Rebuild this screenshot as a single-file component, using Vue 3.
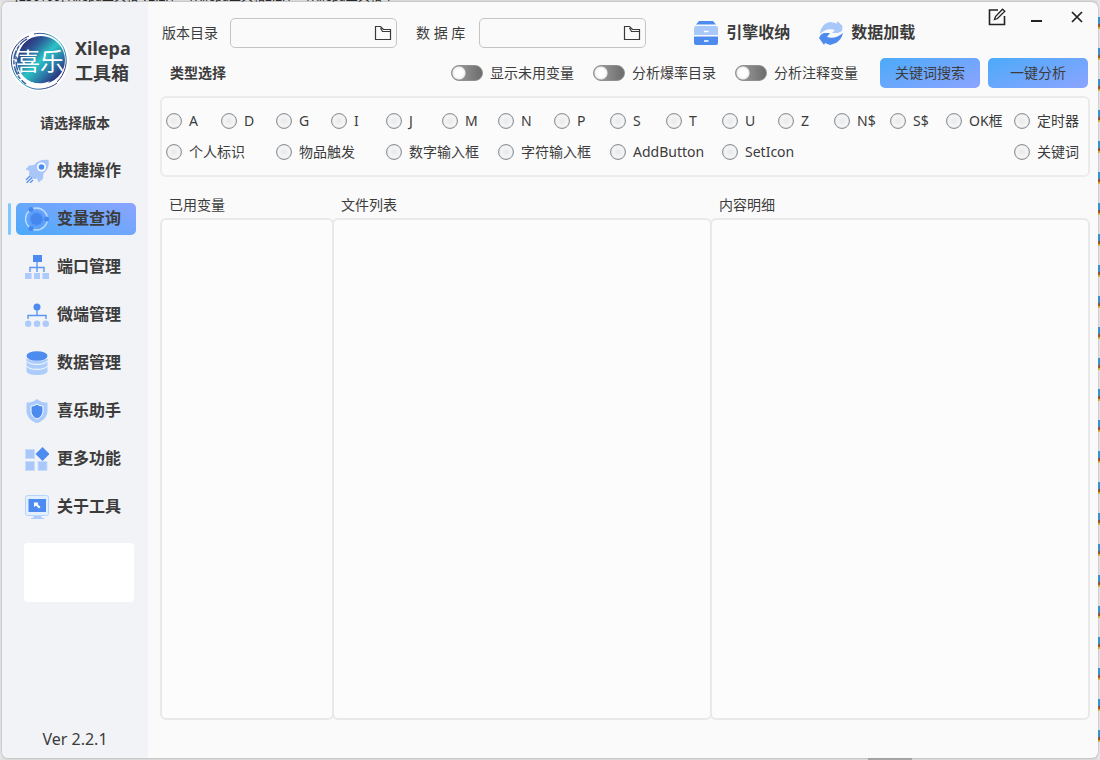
<script setup>
import { ref } from 'vue'

const menu = [
  { id: 'quick', label: '快捷操作' },
  { id: 'vars', label: '变量查询' },
  { id: 'port', label: '端口管理' },
  { id: 'micro', label: '微端管理' },
  { id: 'data', label: '数据管理' },
  { id: 'helper', label: '喜乐助手' },
  { id: 'more', label: '更多功能' },
  { id: 'about', label: '关于工具' },
]
const active = ref('vars')

const switches = ['显示未用变量', '分析爆率目录', '分析注释变量']

const types = [
  'A', 'D', 'G', 'I', 'J', 'M', 'N', 'P', 'S', 'T', 'U', 'Z', 'N$', 'S$', 'OK框', '定时器',
].map((label) => ({ label, span: 'one' })).concat([
  { label: '个人标识', span: 'two' },
  { label: '物品触发', span: 'two' },
  { label: '数字输入框', span: 'two' },
  { label: '字符输入框', span: 'two' },
  { label: 'AddButton', span: 'two' },
  { label: 'SetIcon', span: 'two' },
  { label: '关键词', span: 'last' },
])
const picked = ref('')

const panels = ['已用变量', '文件列表', '内容明细']
const versionDir = ref('')
const database = ref('')
</script>

<template>
  <div class="desktop">
    <div class="behind" aria-hidden="true">
      <span>[256106]-Xilepa工具箱 V2.2.1</span>
      <span>\ Xilepa工具箱2.2.1</span>
      <span>\ Xilepa工具箱 \</span>
    </div>
    <div class="window">
      <aside class="sidebar">
        <div class="brand">
          <svg class="logo" viewBox="0 0 60 60" aria-hidden="true">
            <defs>
              <linearGradient id="ink" x1="0.1" y1="0.1" x2="0.9" y2="0.9">
                <stop offset="0" stop-color="#30206f" />
                <stop offset="0.25" stop-color="#2c5d98" />
                <stop offset="0.5" stop-color="#2cc3c6" />
                <stop offset="0.75" stop-color="#2b74a6" />
                <stop offset="1" stop-color="#2b1c70" />
              </linearGradient>
            </defs>
            <circle cx="30" cy="30" r="30" fill="#fff" />
            <circle cx="32" cy="29" r="24" fill="url(#ink)" />
            <path d="M20 5C8 10 1 20 2.500 33C4 44 11 53 22 57C30 60 42 57 48 52M25 3C39 0 51 8 55 18C60 31 56 43 48 51" fill="none" stroke="url(#ink)" stroke-width="1" />
            <path d="M18 8C9 13 4 23 5 33C6 42 11 49 17 53M10 15C6 23 6 35 10 43" fill="none" stroke="#365f9b" stroke-width="1.500" stroke-dasharray="9 1 4 2" />
            <path d="M14 46C22 53 32 54 41 50C36 57 22 57 14 46Z" fill="#fff" />
            <path d="M7 25C8 17 13 11 20 8C13 13 10 19 9 27Z" fill="#fff" />
            <text x="31" y="39" text-anchor="middle" class="logo-text">喜乐</text>
          </svg>
          <h1>Xilepa<br />工具箱</h1>
        </div>
        <p class="hint">请选择版本</p>

        <nav class="menu">
          <button
            v-for="item in menu"
            :key="item.id"
            type="button"
            :class="['menu-item', { active: active === item.id }]"
            @click="active = item.id"
          >
            <svg class="icon" viewBox="0 0 24 24" aria-hidden="true">
              <g v-if="item.id === 'quick'">
                <path d="M23.500 1C17 0 12 2 9 6L4 6.500L.5 10.500L4.500 12C4 14 4 15 4.500 17L7 19.500C9 20 11 20 12 19.500L13.500 23.500L18 20L18.500 14.500C23 11 24.500 6 23.500 1Z" fill="#a9c6fa" />
                <circle cx="16.500" cy="8" r="4.500" fill="#fff" />
                <circle cx="16.500" cy="8" r="2.800" fill="#4d8bef" />
                <path d="M1 21L5 17M1.500 24L7 18.500M5 24L8 21" stroke="#4d8bef" stroke-width="1.200" />
              </g>
              <g v-else-if="item.id === 'vars'">
                <circle cx="11.500" cy="12" r="11" fill="none" stroke="#c4dbff" stroke-width="1.300" />
                <circle cx="11.500" cy="12" r="8" fill="#5b9bfa" />
                <circle cx="11.500" cy="12" r="6" fill="#4687ee" />
                <circle cx="6" cy="2.500" r="2.500" fill="#4687ee" />
                <circle cx="21.500" cy="12" r="2.500" fill="#4687ee" />
                <circle cx="6" cy="21.500" r="2.500" fill="#4687ee" />
              </g>
              <g v-else-if="item.id === 'port'">
                <path d="M12 6V17M5 17V12.500H19V17" fill="none" stroke="#5b96f2" stroke-width="1.400" />
                <rect x="8" y="0" width="9" height="7" fill="#4d8bef" />
                <path d="M0 18H6.500V24H0ZM9 18H15V24H9ZM17.500 18H24V24H17.500Z" fill="#accafa" />
              </g>
              <g v-else-if="item.id === 'micro'">
                <path d="M12 6V12.500M3 16V12.500H21V16" fill="none" stroke="#5b96f2" stroke-width="1.400" />
                <circle cx="12" cy="4" r="3.500" fill="#4d8bef" />
                <circle cx="3.200" cy="20.800" r="3.200" fill="#accafa" />
                <circle cx="12" cy="20.800" r="3.200" fill="#accafa" />
                <circle cx="20.800" cy="20.800" r="3.200" fill="#accafa" />
              </g>
              <g v-else-if="item.id === 'data'">
                <path d="M1.500 7C5 11 19 11 22.500 7V20C22 25.500 2 25.500 1.500 20Z" fill="#accdfb" />
                <path d="M1.500 10C5 14.500 19 14.500 22.500 10M1.500 15C5 19.500 19 19.500 22.500 15" fill="none" stroke="#eef4fd" stroke-width="1.200" />
                <ellipse cx="12" cy="5" rx="10.500" ry="4.800" fill="#4d8bef" />
              </g>
              <g v-else-if="item.id === 'helper'">
                <path d="M12 0C15 3 19 3.500 22.500 3.500V12C22.500 18 17 23 12 24C7 23 1.500 18 1.500 12V3.500C5 3.500 9 3 12 0Z" fill="#a8cbfc" />
                <path d="M12 5C14 6.500 16 7 18 7V12C18 16 15 19 12 20C9 19 6 16 6 12V7C8 7 10 6.500 12 5Z" fill="#4d8bef" stroke="#fff" stroke-width="1" />
              </g>
              <g v-else-if="item.id === 'more'">
                <path d="M.5 2.500H9.500V11.500H.5ZM.5 14.500H9.500V23.500H.5ZM13 14.500H22V23.500H13Z" fill="#a9c8f9" stroke="#c5dcfc" />
                <path d="M17.500 0L24.500 7L17.500 14L10.500 7Z" fill="#4d8bef" />
              </g>
              <g v-else>
                <rect x="0.500" y="0.500" width="23" height="20" rx="2" fill="#e1effe" stroke="#b5d5fc" />
                <rect x="3.500" y="4" width="17.500" height="13" fill="#4d8bef" />
                <path d="M9 21H16L17 23H19V24H6V23H8Z" fill="#accdfb" />
                <path d="M9 7.500H13.500L12.500 9L15.500 12L14 13.500L11 10.500L9 12Z" fill="#fff" />
              </g>
            </svg>
            <span>{{ item.label }}</span>
          </button>
        </nav>

        <div class="notice"></div>
        <p class="version">Ver 2.2.1</p>
      </aside>

      <main class="main">
        <header class="top">
          <label for="dir" class="field-label">版本目录</label>
          <div class="field">
            <input id="dir" v-model="versionDir" type="text" />
            <button type="button" aria-label="浏览">
              <svg viewBox="0 0 18 16" aria-hidden="true"><path d="M1.500 14.500V1.500H6.500L9.500 4.500H16.500V14.500ZM6.500 3L8.500 6.500H16.500" /></svg>
            </button>
          </div>
          <label for="db" class="field-label second">数 据 库</label>
          <div class="field">
            <input id="db" v-model="database" type="text" />
            <button type="button" aria-label="浏览">
              <svg viewBox="0 0 18 16" aria-hidden="true"><path d="M1.500 14.500V1.500H6.500L9.500 4.500H16.500V14.500ZM6.500 3L8.500 6.500H16.500" /></svg>
            </button>
          </div>
          <button type="button" class="action engine">
            <svg class="icon" viewBox="0 0 24 24" aria-hidden="true">
              <path d="M5 0H19L22 3.500H2Z" fill="#4d8bef" />
              <path d="M1 5H23L24 7V14H0V7Z" fill="#a9c8fa" />
              <path d="M0 15.500H24V22Q24 24 22 24H2Q0 24 0 22Z" fill="#4d8bef" />
              <path d="M10 10.500H14.500M10 20H14.500" stroke="#fff" stroke-width="1.400" />
            </svg>
            <span>引擎收纳</span>
          </button>
          <button type="button" class="action load">
            <svg class="icon" viewBox="0 0 24 24" aria-hidden="true">
              <path d="M1 13C1.500 6 6 1 12 1L18 2.500L18.500 0L23.500 5L23 10L19 12H13L16 9C10 7 5 9 1 13Z" fill="#a9c8fa" />
              <path d="M0 17L2 13.500L5 12H11L8 16C14 18 19 16 24 12C23 17 20 20 17 22L11 24L6 22L5 24Z" fill="#4d8bef" />
            </svg>
            <span>数据加载</span>
          </button>
          <div class="controls">
            <button type="button" aria-label="编辑">
              <svg viewBox="0 0 18 18" aria-hidden="true"><path d="M10 2H1.500V16.500H16.500V8" stroke-width="1.600" /><path d="M6.500 11.500L7.500 8.500L14.500 1.200L16.800 3.200L9.500 10.500Z" stroke-width="1.300" /></svg>
            </button>
            <button type="button" aria-label="最小化">
              <svg viewBox="0 0 18 18" aria-hidden="true"><path d="M3 13H14" stroke-width="2.200" /></svg>
            </button>
            <button type="button" aria-label="关闭">
              <svg viewBox="0 0 18 18" aria-hidden="true"><path d="M4 4L14 14M14 4L4 14" stroke-width="1.700" /></svg>
            </button>
          </div>
        </header>

        <div class="toolbar">
          <h2>类型选择</h2>
          <label v-for="s in switches" :key="s" class="switch">
            <input type="checkbox" />
            <span>{{ s }}</span>
          </label>
          <div class="buttons">
            <button type="button">关键词搜索</button>
            <button type="button">一键分析</button>
          </div>
        </div>

        <div class="types" role="radiogroup" aria-label="类型选择">
          <label v-for="t in types" :key="t.label" :class="['type', t.span]">
            <input v-model="picked" type="radio" name="type" :value="t.label" />
            <span>{{ t.label }}</span>
          </label>
        </div>

        <div class="panels">
          <section v-for="p in panels" :key="p" class="panel">
            <h3>{{ p }}</h3>
            <div class="list"></div>
          </section>
        </div>
      </main>
    </div>
  </div>
</template>

<style>
body {
  margin: 0;
}
</style>

<style scoped>
* {
  box-sizing: border-box;
}

h1, h2, h3, p {
  margin: 0;
}

button {
  padding: 0;
  border: 0;
  background: none;
  color: inherit;
  font: inherit;
  cursor: pointer;
}

.desktop {
  position: relative;
  display: flex;
  min-height: 100vh;
  padding: 2px;
  background:
    linear-gradient(#e4e4e4, #e4e4e4) 0 0 / 2px 100% no-repeat,
    repeating-linear-gradient(180deg, #e4e7ea 0 17px, #2497d8 17px 24px, #9a4b24 24px 27px, #d8bd22 27px 29px, #e4e7ea 29px 31px) 100% 0 / 2px 100% no-repeat,
    linear-gradient(90deg, transparent 868px, #a8a8a8 868px 912px, transparent 912px) 0 100% / 100% 2px no-repeat,
    #dedede;
  color: #3c3c3c;
  font-family: "Noto Sans", "Noto Sans CJK SC", sans-serif;
  font-size: 14px;
  line-height: 20px;
}

.behind {
  position: absolute;
  top: 0;
  left: 0;
  display: flex;
  align-items: flex-end;
  gap: 12px;
  width: 100%;
  height: 4px;
  padding-left: 15px;
  overflow: hidden;
  color: #222;
  font-size: 12px;
  line-height: 14px;
  white-space: nowrap;
}

.window {
  position: relative;
  display: flex;
  flex: 1;
  overflow: hidden;
  border-radius: 6px;
  background: #fafafa;
  box-shadow: 0 0 2px #8c8c8c;
}

.sidebar {
  display: flex;
  flex: none;
  flex-direction: column;
  width: 146px;
  padding: 29px 0 9px;
  background: #f2f3f6;
}

.brand {
  display: flex;
  align-items: center;
  gap: 6px;
  padding-left: 7px;
}

.logo {
  width: 60px;
  height: 60px;
}

.logo-text {
  fill: #fff;
  font-size: 24px;
}

h1 {
  font-size: 18px;
  line-height: 25px;
}

.hint {
  margin-top: 22px;
  font-weight: 700;
  text-align: center;
}

.menu {
  display: flex;
  flex-direction: column;
  gap: 16px;
  margin-top: 22px;
  padding: 0 12px 0 14px;
}

.menu-item {
  position: relative;
  display: flex;
  align-items: center;
  gap: 8px;
  height: 32px;
  padding-left: 9px;
  border-radius: 5px;
  font-size: 16px;
  font-weight: 700;
}

.menu-item span {
  padding-bottom: 2px;
}

.menu-item.active {
  background: linear-gradient(20deg, #4caaf9, #8ca4ff);
}

.menu-item.active::before {
  position: absolute;
  top: 0;
  left: -8px;
  width: 3px;
  height: 100%;
  border-radius: 2px;
  background: #7fc8fd;
  content: "";
}

.icon {
  flex: none;
  width: 24px;
  height: 24px;
}

.notice {
  height: 59px;
  margin: 20px 14px 0 22px;
  border-radius: 4px;
  background: #fff;
}

.version {
  margin-top: auto;
  font-size: 16px;
  text-align: center;
}

.main {
  display: flex;
  flex: 1;
  flex-direction: column;
  min-width: 0;
  padding: 0 8px 38px 12px;
}

.top {
  display: flex;
  flex: none;
  align-items: center;
  height: 56px;
  padding: 6px 0 0 2px;
}

.field-label {
  margin-right: 12px;
  white-space: pre;
}

.field-label.second {
  margin-right: 14px;
  margin-left: 19px;
}

.field {
  display: flex;
  align-items: center;
  width: 167px;
  height: 30px;
  padding-right: 4px;
  border: 1px solid #c4c4c4;
  border-radius: 5px;
}

.field input {
  flex: 1;
  min-width: 0;
  height: 100%;
  padding: 0 6px;
  border: 0;
  outline: 0;
  background: none;
  color: inherit;
  font: inherit;
}

.field button,
.field svg {
  display: block;
  width: 18px;
  height: 16px;
}

.field path,
.controls path {
  fill: none;
  stroke: #222;
}

.field path {
  stroke: #3a3a3a;
  stroke-width: 1.2;
}

.action {
  display: flex;
  align-items: center;
  gap: 8px;
  font-size: 16px;
  font-weight: 700;
}

.action span {
  padding-bottom: 2px;
}

.engine {
  margin-left: 48px;
}

.load {
  margin-left: 29px;
}

.controls {
  display: flex;
  align-self: flex-start;
  gap: 22px;
  margin-left: auto;
  padding-right: 4px;
}

.controls button,
.controls svg {
  display: block;
  width: 18px;
  height: 18px;
}

.toolbar {
  display: flex;
  align-items: center;
  height: 30px;
  padding: 0 2px 0 10px;
}

h2 {
  margin-right: auto;
  font-size: 14px;
  line-height: 20px;
}

.switch {
  display: flex;
  align-items: center;
  gap: 7px;
  margin-left: 19px;
}

.switch input {
  width: 32px;
  height: 16px;
  margin: 0;
  border: 1px solid #909090;
  border-radius: 8px;
  background:
    radial-gradient(circle at 7px 7px, #fff 0 4px, #ededed 6px, transparent 7px),
    linear-gradient(90deg, #aaa, #888 50%, #6c6c6c);
  appearance: none;
}

.buttons {
  display: flex;
  gap: 8px;
  margin-left: 22px;
}

.buttons button {
  width: 100px;
  height: 30px;
  border-radius: 5px;
  background: linear-gradient(160deg, #4caaf9, #8ca4ff);
}

.types {
  display: grid;
  grid-template-columns: repeat(4, 55fr) repeat(10, 56fr) 68fr 68fr;
  grid-auto-rows: 30px;
  row-gap: 1px;
  margin-top: 8px;
  padding: 8px 6px 8px 4px;
  border: 2px solid #ebebeb;
  border-radius: 6px;
  background: #fbfbfb;
}

.type {
  display: flex;
  align-items: center;
  gap: 7px;
  min-width: 0;
  white-space: nowrap;
}

.type.two {
  grid-column-end: span 2;
}

.type.last {
  grid-column: 16;
}

.type input {
  flex: none;
  width: 16px;
  height: 16px;
  margin: 0;
  border: 1px solid #8c9297;
  border-radius: 50%;
  background: radial-gradient(circle, #e9e9e9, #f8f8f8 70%);
  box-shadow: inset 0 0 1px #8c9297;
  appearance: none;
}

.type input:checked {
  background: radial-gradient(circle, #4d8bef 0 4px, #f8f8f8 5px);
}

.panels {
  display: grid;
  flex: 1;
  grid-template-columns: 172fr 378fr 378fr;
  margin-top: 15px;
  padding-right: 2px;
}

.panel {
  display: flex;
  flex-direction: column;
  margin-right: -2px;
}

h3 {
  height: 26px;
  padding-left: 9px;
  font-size: 14px;
  font-weight: 400;
  line-height: 26px;
}

.list {
  flex: 1;
  border: 2px solid #e7e9eb;
  border-radius: 6px;
  background: #fcfcfc;
}
</style>
